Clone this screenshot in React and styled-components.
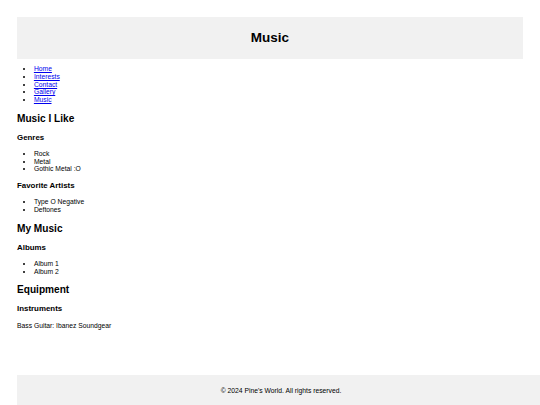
import React from 'react';
import styled, { createGlobalStyle } from 'styled-components';

const GlobalStyle = createGlobalStyle`
  html, body {
    margin: 0;
    padding: 0;
    background: #ffffff;
    overflow: hidden;
  }
  body {
    font-family: 'Liberation Sans', Arial, sans-serif;
    color: #000000;
    font-size: 6.75px;
  }
`;

const Page = styled.div`
  min-height: 100vh;
  box-sizing: border-box;
  padding: 17px 17px 0 17px;
  display: flex;
  flex-direction: column;
`;

const Content = styled.div``;

const Header = styled.header`
  background: #f1f1f1;
  padding: 13.25px 0;
  text-align: center;
`;

const Title = styled.h1`
  margin: 0;
  font-size: 13.5px;
  font-weight: bold;
`;

const List = styled.ul`
  margin: 6.75px 0;
  padding-left: 16.875px;
  list-style: disc;
  line-height: 7.7px;
`;

const NavLink = styled.a`
  color: #0000ee;
  text-decoration: underline;
`;

const Section = styled.section``;

const SectionTitle = styled.h2`
  margin: 9px 0;
  font-size: 10.125px;
  font-weight: bold;
`;

const SubTitle = styled.h3`
  margin: 8.2px 0;
  font-size: 7.9px;
  font-weight: bold;
`;

const Text = styled.p`
  margin: 6.75px 0;
`;

const Footer = styled.footer`
  margin: auto -22px 0 0;
  height: 30px;
  background: #f1f1f1;
  display: flex;
  align-items: center;
  justify-content: center;
  font-size: 6.75px;
`;

const nav = ['Home', 'Interests', 'Contact', 'Gallery', 'Music'];

const App = () => {
  return (
    <>
      <GlobalStyle />
      <Page>
        <Content>
          <Header>
            <Title>Music</Title>
          </Header>
          <nav>
            <List>
              {nav.map((item) => (
                <li key={item}>
                  <NavLink href="#">{item}</NavLink>
                </li>
              ))}
            </List>
          </nav>
          <main>
            <Section>
              <SectionTitle>Music I Like</SectionTitle>
              <SubTitle>Genres</SubTitle>
              <List>
                <li>Rock</li>
                <li>Metal</li>
                <li>Gothic Metal :O</li>
              </List>
              <SubTitle>Favorite Artists</SubTitle>
              <List>
                <li>Type O Negative</li>
                <li>Deftones</li>
              </List>
            </Section>
            <Section>
              <SectionTitle>My Music</SectionTitle>
              <SubTitle>Albums</SubTitle>
              <List>
                <li>Album 1</li>
                <li>Album 2</li>
              </List>
            </Section>
            <Section>
              <SectionTitle>Equipment</SectionTitle>
              <SubTitle>Instruments</SubTitle>
              <Text>Bass Guitar: Ibanez Soundgear</Text>
            </Section>
          </main>
        </Content>
        <Footer>© 2024 Pine's World. All rights reserved.</Footer>
      </Page>
    </>
  );
};

export default App;
